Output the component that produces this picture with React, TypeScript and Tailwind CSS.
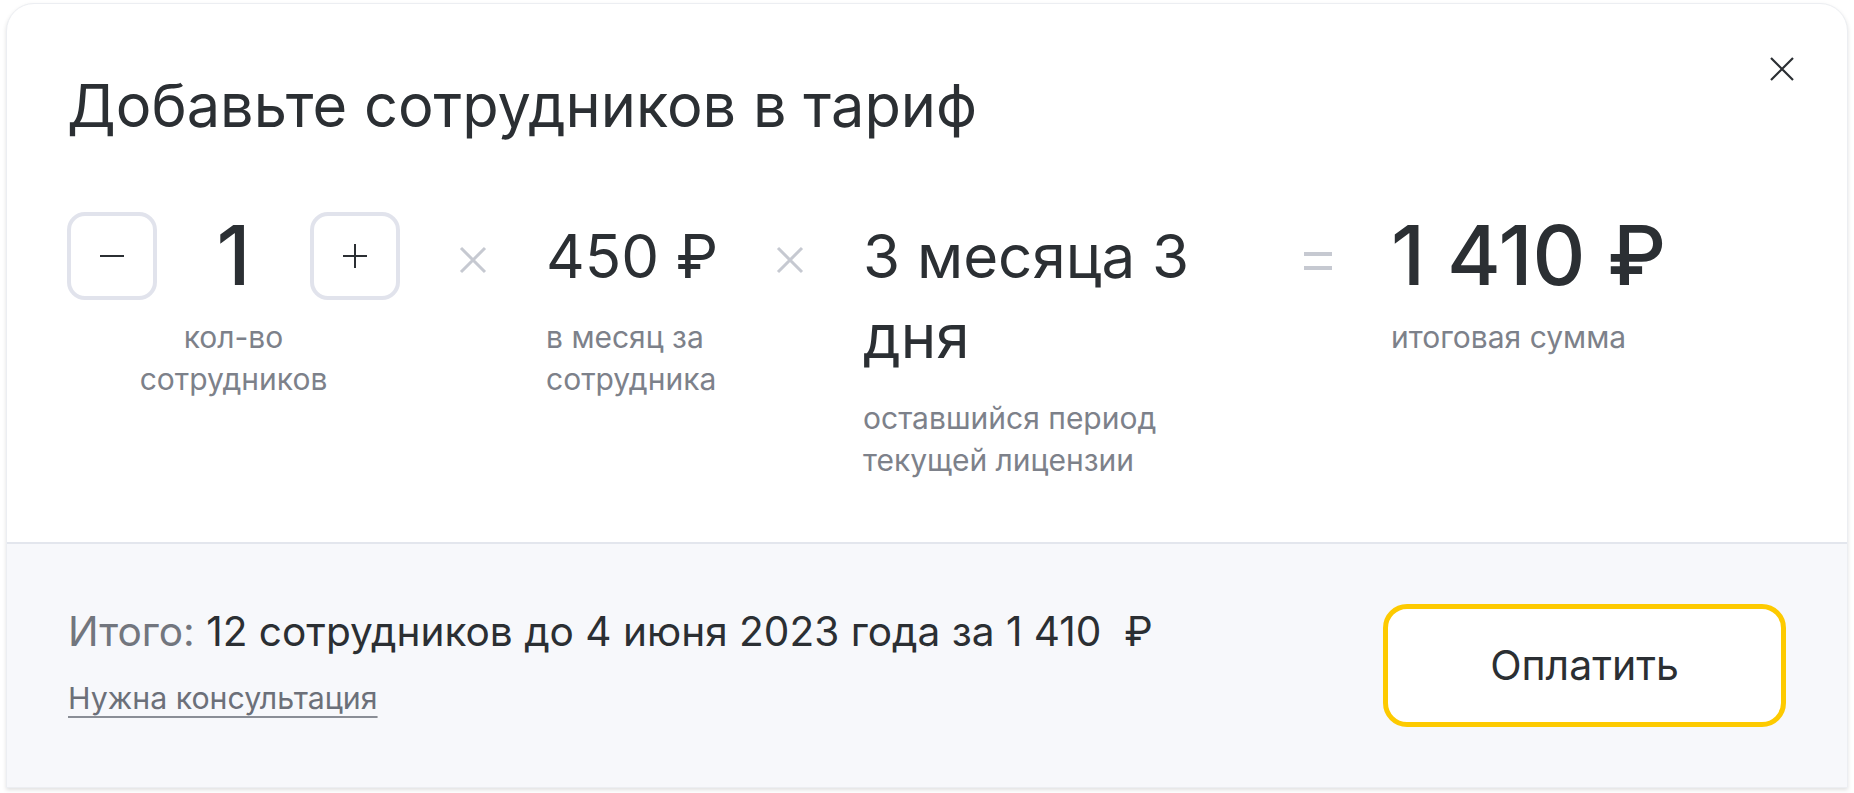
import React from "react";

const font = { fontFamily: "Inter, 'Noto Sans', sans-serif" };

function Times() {
  return (
    <svg width="28" height="28" viewBox="0 0 28 28" className="mt-[10px]">
      <path d="M2 2 L26 26 M26 2 L2 26" stroke="#c6c9d1" strokeWidth="3" strokeLinecap="butt" />
    </svg>
  );
}

function Equals() {
  return (
    <svg width="28" height="20" viewBox="0 0 28 20" className="mt-[8px]">
      <rect x="0" y="0" width="28" height="4" fill="#c6c9d1" />
      <rect x="0" y="14" width="28" height="4" fill="#c6c9d1" />
    </svg>
  );
}

export default function App() {
  return (
    <div className="min-h-screen bg-white px-[6px] pt-[3px]" style={font}>
      <div className="relative flex flex-col rounded-t-[28px] border border-[#eceef2] bg-white shadow-[0_2px_4px_rgba(0,0,0,0.12)]">
        <button className="absolute right-[52px] top-[52px] flex h-[26px] w-[26px] items-center justify-center">
          <svg width="24" height="24" viewBox="0 0 24 24">
            <path d="M1 1 L23 23 M23 1 L1 23" stroke="#2b2f33" strokeWidth="2.2" />
          </svg>
        </button>

        <div className="px-[60px] pb-[61px] pt-[65px]">
          <h1 className="text-[59.5px] font-normal leading-[72px] text-[#2b2f33]">
            Добавьте сотрудников в тариф
          </h1>

          <div className="mt-[71px] flex items-start gap-[59px]">
            <div className="flex w-[333px] flex-col items-center">
              <div className="flex h-[88px] items-center">
                <button className="flex h-[88px] w-[90px] items-center justify-center rounded-[18px] border-[4px] border-[#e1e3ec] bg-white">
                  <svg width="24" height="4" viewBox="0 0 24 4">
                    <rect x="0" y="1" width="24" height="2" fill="#2b2f33" />
                  </svg>
                </button>
                <div className="w-[153px] text-center text-[82px] font-medium leading-[88px] text-[#2b2f33]">1</div>
                <button className="flex h-[88px] w-[90px] items-center justify-center rounded-[18px] border-[4px] border-[#e1e3ec] bg-white">
                  <svg width="24" height="24" viewBox="0 0 24 24">
                    <rect x="0" y="11" width="24" height="2" fill="#2b2f33" />
                    <rect x="11" y="0" width="2" height="24" fill="#2b2f33" />
                  </svg>
                </button>
              </div>
              <div className="mt-[16px] whitespace-nowrap text-center text-[30px] leading-[42px] text-[#7d818a]">
                кол-во
                <br />
                сотрудников
              </div>
            </div>

            <div className="pt-[24px]">
              <Times />
            </div>

            <div className="flex w-[171px] flex-col pt-[4px]">
              <div className="whitespace-nowrap text-[60px] leading-[80px] text-[#2b2f33]">450 ₽</div>
              <div className="mt-[20px] text-[30px] leading-[42px] text-[#7d818a]">в месяц за сотрудника</div>
            </div>

            <div className="pt-[24px]">
              <Times />
            </div>

            <div className="flex w-[382px] flex-col pt-[4px]">
              <div className="text-[60px] leading-[80px] text-[#2b2f33]">3 месяца 3 дня</div>
              <div className="mt-[21px] text-[30px] leading-[42px] text-[#7d818a]">оставшийся период текущей лицензии</div>
            </div>

            <div className="pt-[32px]">
              <Equals />
            </div>

            <div className="flex flex-col">
              <div className="whitespace-nowrap text-[82px] font-medium leading-[88px] text-[#2b2f33]">1 410 ₽</div>
              <div className="mt-[16px] text-[30px] leading-[42px] text-[#7d818a]">итоговая сумма</div>
            </div>
          </div>
        </div>

        <div className="flex h-[245px] items-center justify-between border-t-2 border-[#e3e6ed] bg-[#f7f8fb] pl-[61px] pr-[61px]">
          <div className="mb-[8px] flex flex-col">
            <div className="text-[40.6px] leading-[48px] text-[#2b2f33]">
              <span className="text-[#72767e]">Итого:</span> 12 сотрудников до 4 июня 2023 года за 1 410&nbsp;&nbsp;₽
            </div>
            <a className="mt-[24px] self-start text-[30.3px] leading-[36px] text-[#6c7079] underline decoration-[#8a8e96] decoration-[2px] underline-offset-[7px] [text-decoration-skip-ink:none]">
              Нужна консультация
            </a>
          </div>
          <button className="flex h-[123px] w-[403px] items-center justify-center rounded-[24px] border-[5px] border-[#fdca00] bg-white text-[41px] text-[#2b2f33]">
            Оплатить
          </button>
        </div>
      </div>
    </div>
  );
}
